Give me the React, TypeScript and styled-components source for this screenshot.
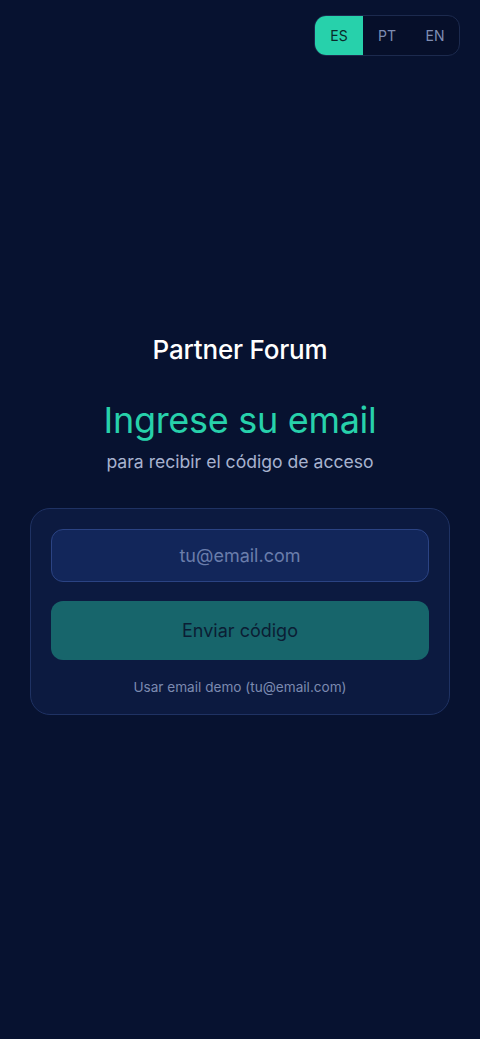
import React, { useState } from "react";
import styled, { createGlobalStyle } from "styled-components";

const GlobalStyle = createGlobalStyle`
  html, body {
    margin: 0;
    padding: 0;
    background: #071230;
  }
  * { box-sizing: border-box; }
`;

const Page = styled.div`
  position: relative;
  min-height: 100vh;
  display: flex;
  flex-direction: column;
  align-items: center;
  justify-content: center;
  padding: 22px 30px 12px;
  background: #071230;
  font-family: Inter, "Noto Sans", sans-serif;
`;

const LangSwitch = styled.div`
  position: absolute;
  top: 15px;
  right: 20px;
  display: flex;
  height: 41px;
  border: 1px solid #1c2a4e;
  border-radius: 12px;
  overflow: hidden;
  background: #060f2a;
`;

const LangButton = styled.button<{ $active?: boolean }>`
  width: 48px;
  border: none;
  padding: 0;
  font-family: inherit;
  font-size: 14px;
  color: ${(p) => (p.$active ? "#0a2a2a" : "#7f8db3")};
  background: ${(p) => (p.$active ? "#27d1ab" : "transparent")};
  cursor: pointer;
`;

const Brand = styled.h2`
  margin: 0;
  font-size: 26px;
  font-weight: 500;
  color: #ffffff;
  letter-spacing: -0.2px;
`;

const Title = styled.h1`
  margin: 33px 0 0;
  font-size: 36px;
  font-weight: 400;
  color: #27d1ab;
  letter-spacing: -0.3px;
`;

const Subtitle = styled.p`
  margin: 9px 0 0;
  font-size: 17.6px;
  color: #a7b2cf;
`;

const Card = styled.div`
  width: 100%;
  margin-top: 36px;
  padding: 20px 20px 19px;
  display: flex;
  flex-direction: column;
  gap: 19px;
  background: #0c1a40;
  border: 1px solid #1f3263;
  border-radius: 20px;
`;

const EmailInput = styled.input`
  height: 53px;
  width: 100%;
  border: 1px solid #2b4383;
  border-radius: 12px;
  background: #12265a;
  color: #e4e9f5;
  font-family: inherit;
  font-size: 18px;
  text-align: center;
  outline: none;

  &::placeholder {
    color: #6a7dab;
  }
`;

const SubmitButton = styled.button`
  height: 59px;
  width: 100%;
  border: none;
  border-radius: 12px;
  background: #17656b;
  color: #0b1d34;
  font-family: inherit;
  font-size: 18px;
  cursor: pointer;
`;

const DemoLink = styled.button`
  border: none;
  background: none;
  padding: 0;
  font-family: inherit;
  font-size: 13.6px;
  color: #7c8ab0;
  cursor: pointer;
`;

export default function App() {
  const [lang, setLang] = useState("ES");
  const [email, setEmail] = useState("");

  return (
    <>
      <GlobalStyle />
      <Page>
        <LangSwitch>
          {["ES", "PT", "EN"].map((l) => (
            <LangButton key={l} $active={lang === l} onClick={() => setLang(l)}>
              {l}
            </LangButton>
          ))}
        </LangSwitch>
        <Brand>Partner Forum</Brand>
        <Title>Ingrese su email</Title>
        <Subtitle>para recibir el código de acceso</Subtitle>
        <Card>
          <EmailInput
            type="email"
            placeholder="tu@email.com"
            value={email}
            onChange={(e) => setEmail(e.target.value)}
          />
          <SubmitButton>Enviar código</SubmitButton>
          <DemoLink onClick={() => setEmail("tu@email.com")}>
            Usar email demo (tu@email.com)
          </DemoLink>
        </Card>
      </Page>
    </>
  );
}
